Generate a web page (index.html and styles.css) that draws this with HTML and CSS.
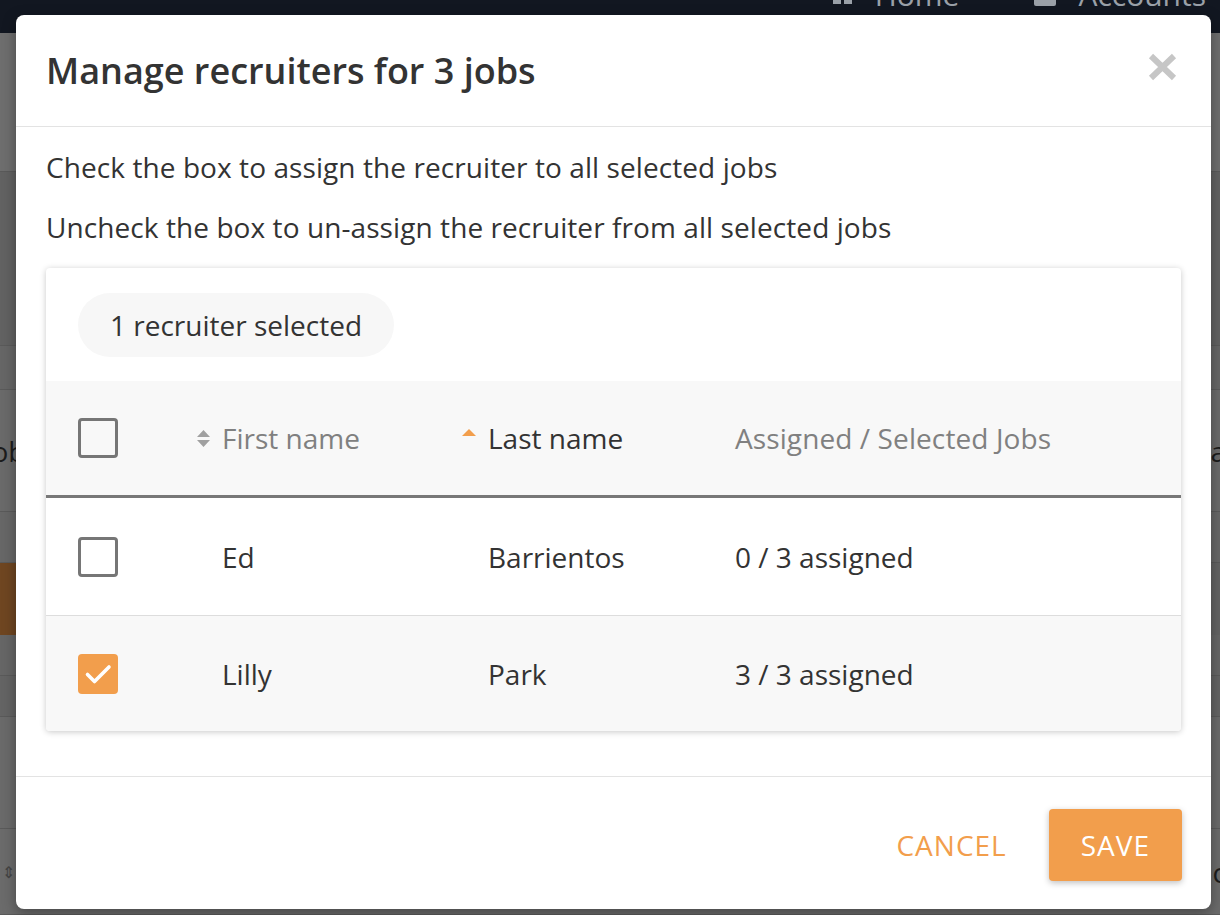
FILE: index.html
```html
<!DOCTYPE html>
<html lang="en">
<head>
<meta charset="utf-8">
<title>Manage recruiters</title>
<link rel="stylesheet" href="styles.css">
</head>
<body>
<div class="page">
  <header class="nav">
    <div class="nav-items">
      <span class="nav-item">
        <svg class="nav-icon" width="20" height="20" viewBox="0 0 20 20"><rect x="0" y="0" width="8" height="8" fill="#9aa0a8"/><rect x="11" y="0" width="8" height="8" fill="#9aa0a8"/><rect x="0" y="11" width="8" height="8" fill="#9aa0a8"/><rect x="11" y="11" width="8" height="8" fill="#9aa0a8"/></svg>
        Home
      </span>
      <span class="nav-item">
        <svg class="nav-icon" width="22" height="22" viewBox="0 0 22 22"><rect x="0" y="4" width="22" height="18" rx="2" fill="#9aa0a8"/><rect x="8" y="10" width="6" height="5" fill="#121721"/></svg>
        Accounts
      </span>
    </div>
  </header>
  <div class="bg-row r1"><span class="edge-l">–</span></div>
  <div class="bg-row r2"></div>
  <div class="bg-row r3"></div>
  <div class="bg-row r4"><span class="edge-l">Job</span><span class="edge-r">a</span></div>
  <div class="bg-row r5"></div>
  <div class="bg-row r6"><span class="orange-block"></span></div>
  <div class="bg-row r7"></div>
  <div class="bg-row r8"></div>
  <div class="bg-row r9"><span class="edge-l">e</span></div>
  <div class="bg-row r10"><span class="edge-l small">&#8661;</span><span class="edge-r">c</span></div>
</div>

<div class="modal" role="dialog">
  <div class="modal-header">
    <h2 class="modal-title">Manage recruiters for 3 jobs</h2>
    <button class="close" aria-label="Close">
      <svg width="29" height="28" viewBox="0 0 29 28"><path d="M3 3 L26 25 M26 3 L3 25" stroke="#c6c6c6" stroke-width="6" stroke-linecap="butt"/></svg>
    </button>
  </div>

  <div class="modal-body">
    <p class="hint">Check the box to assign the recruiter to all selected jobs</p>
    <p class="hint second">Uncheck the box to un-assign the recruiter from all selected jobs</p>

    <div class="card">
      <div class="card-top"><span class="chip">1 recruiter selected</span></div>
      <div class="table">
        <div class="tr thead">
          <div class="cell check-cell"><span class="checkbox"></span></div>
          <div class="cell th">
            <svg class="sort-icon" width="13" height="19" viewBox="0 0 13 19"><path d="M0 8 L6.5 1 L13 8 Z M0 11 L6.5 18 L13 11 Z" fill="#a0a0a0"/></svg>
            <span>First name</span>
          </div>
          <div class="cell th active">
            <svg class="sort-icon" width="14" height="19" viewBox="0 0 14 19"><path d="M0 8 L7 1 L14 8 Z" fill="#f29e4c"/></svg>
            <span>Last name</span>
          </div>
          <div class="cell th plain">Assigned / Selected Jobs</div>
        </div>
        <div class="tr">
          <div class="cell check-cell"><span class="checkbox"></span></div>
          <div class="cell">Ed</div>
          <div class="cell">Barrientos</div>
          <div class="cell">0 / 3 assigned</div>
        </div>
        <div class="tr alt">
          <div class="cell check-cell">
            <span class="checkbox checked">
              <svg width="40" height="40" viewBox="0 0 40 40"><path d="M9.5 20.5 L16.5 27.5 L31 13" fill="none" stroke="#fff" stroke-width="3.6" stroke-linecap="round" stroke-linejoin="round"/></svg>
            </span>
          </div>
          <div class="cell">Lilly</div>
          <div class="cell">Park</div>
          <div class="cell">3 / 3 assigned</div>
        </div>
      </div>
    </div>
  </div>

  <div class="modal-footer">
    <button class="btn btn-text">CANCEL</button>
    <button class="btn btn-primary">SAVE</button>
  </div>
</div>
</body>
</html>
```

FILE: styles.css
```css
* { box-sizing: border-box; }

html, body {
  margin: 0;
  padding: 0;
}

body {
  width: 1220px;
  height: 915px;
  overflow: hidden;
  background: #666666;
  font-family: "Open Sans", "Noto Sans", "Liberation Sans", sans-serif;
  color: #333333;
  position: relative;
}

/* ---------- backdrop page ---------- */
.page {
  display: flex;
  flex-direction: column;
}

.nav {
  height: 33px;
  background: #121721;
  overflow: hidden;
}

.nav-items {
  display: flex;
  justify-content: flex-end;
  gap: 75px;
  padding-right: 14px;
  margin-top: -25px;
}

.nav-item {
  display: inline-flex;
  align-items: center;
  gap: 22px;
  font-size: 30px;
  line-height: 40px;
  color: #9aa0a8;
}

.bg-row {
  display: flex;
  justify-content: space-between;
  align-items: center;
  border-bottom: 1px solid #5a5a5a;
  background: #6a6a6a;
  font-size: 28px;
  color: #1c1c1c;
  overflow: hidden;
}

.edge-l { margin-left: -16px; }
.edge-l.small { margin-left: 2px; color: #444; font-size: 16px; }
.edge-r { margin-right: -6px; }

.r1 { height: 139px; background: #6e6e6e; }
.r2 { height: 174px; background: #626262; }
.r3 { height: 44px; background: #666666; }
.r4 { height: 122px; background: #6a6a6a; }
.r5 { height: 51px; background: #676767; }
.r6 { height: 72px; background: #636363; border-bottom: none; }
.r7 { height: 41px; background: #666666; }
.r8 { height: 41px; background: #646464; }
.r9 { height: 112px; background: #6a6a6a; }
.r10 { height: 86px; background: #6b6b6b; }

.orange-block {
  width: 60px;
  height: 72px;
  background: #6f4621;
}

/* ---------- modal ---------- */
.modal {
  position: absolute;
  left: 16px;
  top: 15px;
  width: 1195px;
  height: 894px;
  background: #ffffff;
  border-radius: 8px;
  box-shadow: 0 4px 14px rgba(0, 0, 0, 0.35);
  display: flex;
  flex-direction: column;
  overflow: hidden;
}

.modal-header {
  height: 112px;
  flex: none;
  border-bottom: 1px solid #e3e3e3;
  display: flex;
  align-items: center;
  justify-content: space-between;
  padding: 0 34px 0 30px;
}

.modal-title {
  margin: 0;
  font-size: 36px;
  font-weight: 600;
  color: #333333;
}

.close {
  border: none;
  background: none;
  padding: 0;
  margin-top: -8px;
  width: 29px;
  height: 28px;
  display: flex;
}

.modal-body {
  flex: 1;
  padding: 22px 30px 0 30px;
}

.hint {
  margin: 0;
  font-size: 28px;
  line-height: 36px;
  letter-spacing: 0.08px;
  color: #333333;
}

.hint.second { margin-top: 24px; }

.card {
  margin-top: 23px;
  border-radius: 4px;
  background: #ffffff;
  box-shadow: 0 1px 6px rgba(0, 0, 0, 0.22);
  overflow: hidden;
}

.card-top {
  padding: 25px 32px 24px;
}

.chip {
  display: inline-block;
  height: 64px;
  line-height: 64px;
  padding: 0 32px;
  border-radius: 32px;
  background: #f7f7f7;
  font-size: 28px;
  color: #333333;
}

.tr {
  display: grid;
  grid-template-columns: 176px 266px 247px 1fr;
  align-items: center;
  height: 118px;
  border-bottom: 1px solid #dddddd;
  font-size: 28px;
  color: #333333;
}

.tr.thead {
  height: 117px;
  background: #f8f8f8;
  border-bottom: 3px solid #787878;
}

.tr.alt {
  height: 115px;
  background: #f8f8f8;
  border-bottom: none;
}

.check-cell {
  padding-left: 32px;
  display: flex;
  align-items: center;
}

.checkbox {
  width: 40px;
  height: 40px;
  border: 3px solid #767676;
  border-radius: 4px;
  background: #ffffff;
  display: block;
}

.thead .checkbox { background: transparent; }

.checkbox.checked {
  border: none;
  background: #f29e4c;
}

.checkbox.checked svg { display: block; }

.th {
  display: flex;
  align-items: center;
  gap: 12px;
  margin-left: -25px;
  color: #808080;
}

.th.active { color: #333333; margin-left: -26px; }
.th.active .sort-icon { margin-top: -2px; }
.th.plain { margin-left: 0; letter-spacing: 0.1px; }

.sort-icon { flex: none; }

/* ---------- footer ---------- */
.modal-footer {
  flex: none;
  height: 133px;
  border-top: 1px solid #e3e3e3;
  display: flex;
  justify-content: flex-end;
  align-items: center;
  gap: 10px;
  padding: 3px 29px 0 0;
}

.btn {
  height: 72px;
  border: none;
  border-radius: 4px;
  font-family: inherit;
  font-size: 28px;
  letter-spacing: 1px;
  padding: 0 32px;
  cursor: pointer;
}

.btn-text {
  background: transparent;
  color: #f29e4c;
}

.btn-primary {
  background: #f29e4c;
  color: #ffffff;
  box-shadow: 0 2px 6px rgba(0, 0, 0, 0.25);
}
```
